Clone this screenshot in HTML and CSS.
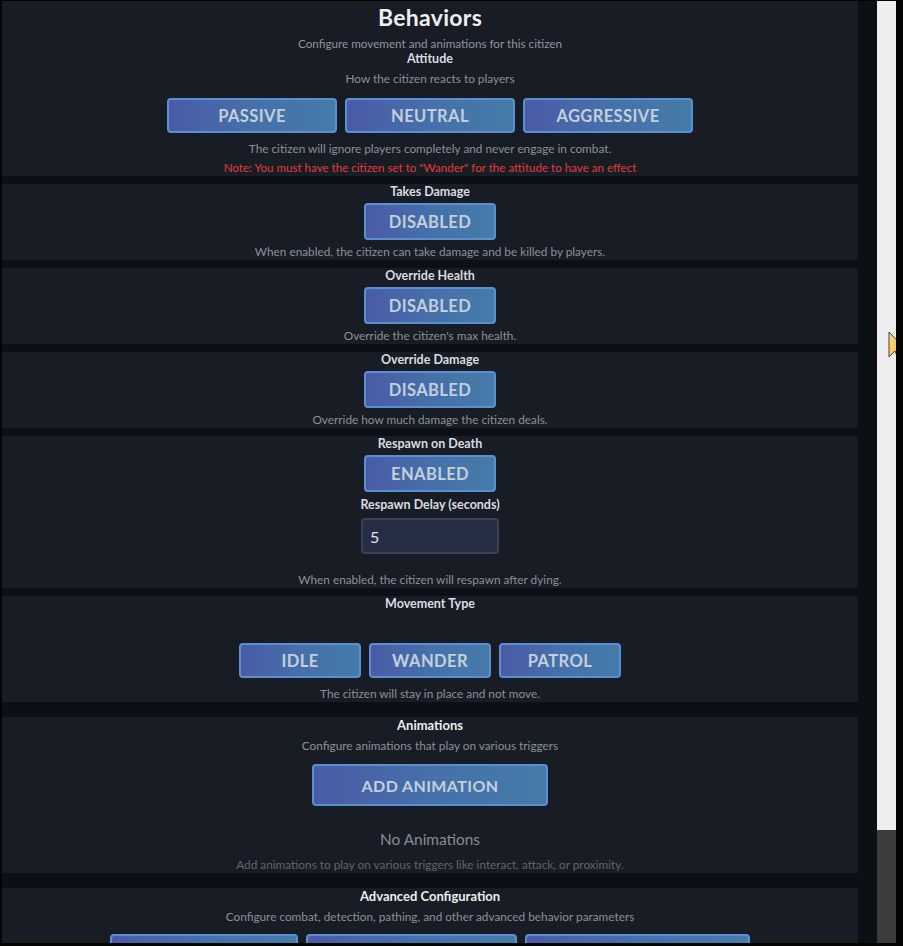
FILE: index.html
```html
<!DOCTYPE html>
<html lang="en">
<head>
    <meta charset="UTF-8">
    <meta name="viewport" content="width=device-width, initial-scale=1.0">
    <title>Citizen Behaviors</title>
    <link rel="stylesheet" href="styles.css">
</head>
<body>
    <div class="frame">
        <main class="viewport">
            <section class="panel panel-top">
                <h1 class="page-title">Behaviors</h1>
                <p class="page-sub">Configure movement and animations for this citizen</p>
                <h3 class="label">Attitude</h3>
                <p class="desc desc-first">How the citizen reacts to players</p>
                <div class="choice-row row-attitude">
                    <button type="button" class="btn btn-attitude">Passive</button>
                    <button type="button" class="btn btn-attitude">Neutral</button>
                    <button type="button" class="btn btn-attitude">Aggressive</button>
                </div>
                <p class="desc desc-after-row">The citizen will ignore players completely and never engage in combat.</p>
                <p class="note">Note: You must have the citizen set to "Wander" for the attitude to have an effect</p>
            </section>

            <section class="panel">
                <h3 class="label">Takes Damage</h3>
                <button type="button" class="btn btn-toggle">Disabled</button>
                <p class="desc desc-toggle">When enabled, the citizen can take damage and be killed by players.</p>
            </section>

            <section class="panel">
                <h3 class="label">Override Health</h3>
                <button type="button" class="btn btn-toggle">Disabled</button>
                <p class="desc desc-toggle">Override the citizen's max health.</p>
            </section>

            <section class="panel">
                <h3 class="label">Override Damage</h3>
                <button type="button" class="btn btn-toggle">Disabled</button>
                <p class="desc desc-toggle">Override how much damage the citizen deals.</p>
            </section>

            <section class="panel">
                <h3 class="label">Respawn on Death</h3>
                <button type="button" class="btn btn-toggle">Enabled</button>
                <label class="label label-field" for="respawnDelay">Respawn Delay (seconds)</label>
                <input type="text" id="respawnDelay" class="field" value="5">
                <p class="desc desc-respawn">When enabled, the citizen will respawn after dying.</p>
            </section>

            <section class="panel panel-wide-gap">
                <h3 class="label">Movement Type</h3>
                <div class="choice-row row-movement">
                    <button type="button" class="btn btn-movement">Idle</button>
                    <button type="button" class="btn btn-movement">Wander</button>
                    <button type="button" class="btn btn-movement">Patrol</button>
                </div>
                <p class="desc desc-after-row">The citizen will stay in place and not move.</p>
            </section>

            <section class="panel panel-wide-gap">
                <h3 class="label label-big">Animations</h3>
                <p class="desc desc-sub">Configure animations that play on various triggers</p>
                <button type="button" class="btn btn-add">Add Animation</button>
                <p class="empty-title">No Animations</p>
                <p class="desc desc-empty">Add animations to play on various triggers like interact, attack, or proximity.</p>
            </section>

            <section class="panel">
                <h3 class="label label-big">Advanced Configuration</h3>
                <p class="desc desc-sub">Configure combat, detection, pathing, and other advanced behavior parameters</p>
                <div class="choice-row row-advanced">
                    <button type="button" class="btn btn-adv-combat" aria-label="Combat"></button>
                    <button type="button" class="btn btn-adv-detect" aria-label="Detection"></button>
                    <button type="button" class="btn btn-adv-path" aria-label="Pathing"></button>
                </div>
            </section>
        </main>

        <div class="scrollbar">
            <div class="thumb"></div>
            <svg class="cursor" width="20" height="32" viewBox="0 0 20 32">
                <defs>
                    <linearGradient id="cursorFill" x1="0" y1="0" x2="1" y2="1">
                        <stop offset="0" stop-color="#ffe08a"/>
                        <stop offset="1" stop-color="#f0a23c"/>
                    </linearGradient>
                </defs>
                <polygon points="1,1 1,26 7,20 11,30 14,29 10,19 18,19" fill="url(#cursorFill)" stroke="#4a4030" stroke-width="1"/>
            </svg>
        </div>
    </div>
</body>
</html>
```

FILE: styles.css
```css
* {
    box-sizing: border-box;
}

body {
    margin: 0;
    padding: 0;
    background-color: #030502;
    font-family: Lato, 'Noto Sans', sans-serif;
    overflow: hidden;
}

.frame {
    display: flex;
    height: 946px;
    padding: 1px 7px 3px 2px;
    background-color: #030502;
}

.viewport {
    flex: 1;
    display: flex;
    flex-direction: column;
    gap: 8px;
    padding-right: 19px;
    background-color: #0c0f16;
    overflow: hidden;
}

/* Panels */

.panel {
    display: flex;
    flex-direction: column;
    align-items: center;
    flex-shrink: 0;
    background-color: #181c24;
    text-align: center;
}

.panel-top {
    padding-top: 3px;
}

.panel-wide-gap {
    margin-bottom: 7px;
}

h1, h3, p {
    margin: 0;
}

.page-title {
    font-size: 23px;
    line-height: 26px;
    font-weight: 700;
    letter-spacing: 0.3px;
    color: #eceef1;
}

.page-sub {
    margin-top: 6px;
    font-size: 11.7px;
    line-height: 15px;
    color: #8f96a1;
}

.label {
    display: block;
    font-size: 12.5px;
    line-height: 16px;
    font-weight: 700;
    color: #d9dce1;
}

.label-big {
    font-size: 13px;
    color: #eceef1;
}

.label-field {
    margin-top: 5px;
}

.desc {
    font-size: 11.8px;
    line-height: 16px;
    color: #8a919b;
}

.desc-first {
    margin-top: 4px;
}

.desc-after-row {
    margin-top: 8px;
}

.desc-toggle {
    margin-top: 4px;
}

.desc-respawn {
    margin-top: 18px;
}

.desc-sub {
    margin-top: 5px;
}

.desc-empty {
    margin-top: 8px;
    color: #5f6670;
}

.note {
    margin-top: 3px;
    font-size: 11.6px;
    line-height: 16px;
    color: #e23c3c;
}

.empty-title {
    margin-top: 23px;
    font-size: 15.4px;
    line-height: 20px;
    color: #878d96;
}

/* Buttons */

.choice-row {
    display: flex;
    gap: 8px;
}

.row-attitude {
    margin-top: 11px;
}

.row-movement {
    margin-top: 31px;
}

.row-advanced {
    margin-top: 9px;
}

.btn {
    display: flex;
    align-items: center;
    justify-content: center;
    padding: 0;
    border: 2px solid #5a8fd2;
    border-radius: 4px;
    background: linear-gradient(90deg, #4a5ba6 0%, #4670aa 50%, #457ba9 100%);
    color: #c3cfdb;
    font-family: inherit;
    font-size: 16.5px;
    font-weight: 700;
    text-transform: uppercase;
    letter-spacing: 0.4px;
    cursor: pointer;
}

.btn-attitude {
    width: 170px;
    height: 35px;
}

.btn-movement {
    width: 122px;
    height: 35px;
}

.btn-toggle {
    width: 132px;
    height: 37px;
    margin-top: 3px;
}

.btn-add {
    width: 236px;
    height: 42px;
    margin-top: 10px;
    font-size: 16px;
}

.btn-adv-combat,
.btn-adv-detect,
.btn-adv-path {
    height: 42px;
}

.btn-adv-combat {
    width: 188px;
}

.btn-adv-detect {
    width: 211px;
}

.btn-adv-path {
    width: 225px;
}

/* Input */

.field {
    width: 138px;
    height: 36px;
    margin-top: 5px;
    padding: 0 7px;
    background-color: #252e45;
    border: 2px solid #3a4356;
    border-radius: 4px;
    color: #e4e6ea;
    font-family: inherit;
    font-size: 16px;
}

/* Scrollbar */

.scrollbar {
    position: relative;
    width: 19px;
    background-color: #eeeeee;
    overflow: hidden;
}

.thumb {
    position: absolute;
    left: 0;
    right: 0;
    bottom: 0;
    height: 113px;
    background-color: #3c3c3c;
}

.cursor {
    position: absolute;
    left: 11px;
    top: 330px;
}
```
